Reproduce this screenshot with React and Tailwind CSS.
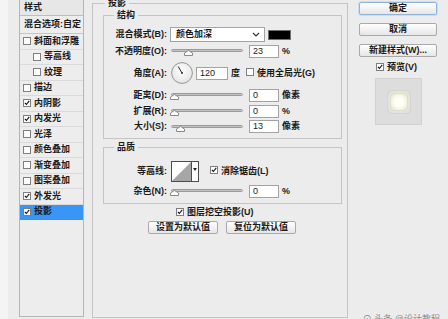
import React from "react";

// Photoshop "图层样式" dialog, drop shadow page
const STYLES = [
  { name: "斜面和浮雕", on: false },
  { name: "等高线", on: false, sub: true },
  { name: "纹理", on: false, sub: true },
  { name: "描边", on: false },
  { name: "内阴影", on: true },
  { name: "内发光", on: true },
  { name: "光泽", on: false },
  { name: "颜色叠加", on: false },
  { name: "渐变叠加", on: false },
  { name: "图案叠加", on: false },
  { name: "外发光", on: true },
  { name: "投影", on: true, active: true },
];

function Check({ on }) {
  return (
    <span className="inline-flex h-[8px] w-[8px] shrink-0 items-center justify-center border border-[#7f7f7f] bg-white">
      {on && (
        <svg viewBox="0 0 8 8" className="h-[8px] w-[8px]">
          <path d="M1.2 3.8 L3.2 6 L7 1.2" fill="none" stroke="#111" strokeWidth="1.5" />
        </svg>
      )}
    </span>
  );
}

function Slider({ thumb }) {
  return (
    <div className="relative ml-[4px] h-[10px] w-[72px] shrink-0">
      <div className="absolute left-0 right-0 top-[3px] h-[3px] rounded-full border border-[#9a9a9a] bg-gradient-to-b from-[#a9a9a9] to-[#dedede]" />
      <svg viewBox="0 0 9 6" className="absolute top-[4px] h-[6px] w-[9px]" style={{ left: thumb - 4 }}>
        <path d="M0.5 5.5 L0.5 3 L4.5 0.5 L8.5 3 L8.5 5.5 Z" fill="#fff" stroke="#888" strokeWidth="1" />
      </svg>
    </div>
  );
}

function Field({ value, className = "ml-[6px] w-[30px]" }) {
  return (
    <div className={`${className} flex h-[13px] shrink-0 items-center border border-[#a3a3a3] bg-white pl-[3px] text-[9px] font-normal leading-[11px]`}>
      {value}
    </div>
  );
}

function Label({ children }) {
  return <div className="w-[63px] shrink-0 text-right">{children}</div>;
}

function Button({ children, primary, className = "" }) {
  return (
    <div
      className={`flex h-[13px] items-center justify-center rounded-[2px] border bg-gradient-to-b from-white to-[#e6e6e6] text-[9px] font-semibold leading-[11px] ${
        primary ? "border-[#8fb4de] shadow-[0_0_0_1px_#c9def4]" : "border-[#a9a9a9]"
      } ${className}`}
    >
      {children}
    </div>
  );
}

function SliderRow({ label, value, unit, thumb, h = "h-[16px]" }) {
  return (
    <div className={`flex ${h} items-center`}>
      <Label>{label}</Label>
      <Slider thumb={thumb} />
      <Field value={value} />
      <span className="ml-[3px]">{unit}</span>
    </div>
  );
}

export default function App() {
  return (
    <div className="relative flex h-[319px] w-[448px] overflow-hidden bg-[#ececec] font-['Liberation_Sans','Noto_Sans_CJK_SC',sans-serif] text-[9px] font-semibold leading-[11px] text-[#1a1a1a]">
      <div className="w-[8px] shrink-0 bg-[#f4f4f4]" />
      <div className="w-[11px] shrink-0" />

      {/* style list */}
      <div className="flex h-[317px] w-[65px] shrink-0 flex-col border-x border-b border-[#b5b5b5] bg-[#ededed]">
        <div className="flex h-[16px] shrink-0 items-center border-b border-[#bdbdbd] bg-[#e7e7e7] pl-[4px]">样式</div>
        <div className="flex h-[18px] shrink-0 items-center border-b border-[#c6c6c6] pl-[4px]">混合选项:自定</div>
        {STYLES.map((s) => (
          <div
            key={s.name}
            className={`flex h-[15.5px] shrink-0 items-center gap-[3px] border-b ${
              s.active ? "border-[#3592f0] bg-[#3a96f6]" : "border-[#dadada]"
            } ${s.sub ? "pl-[13px]" : "pl-[3px]"}`}
          >
            <Check on={s.on} />
            <span>{s.name}</span>
          </div>
        ))}
      </div>

      {/* main drop shadow panel */}
      <fieldset className="ml-[8px] mt-[-2px] h-[320px] w-[256px] shrink-0 border border-[#c4c4c4] pl-[10px] pr-[5px]">
        <legend className="ml-[2px] px-[3px] leading-[10px]">投影</legend>

        <fieldset className="mt-[2px] h-[129px] border border-[#c4c4c4] pt-[6px]">
          <legend className="ml-[10px] px-[3px] leading-[10px]">结构</legend>

          <div className="flex h-[17px] items-center">
            <Label>混合模式(B):</Label>
            <div className="ml-[3px] flex h-[15px] w-[95px] items-center justify-between border border-[#a3a3a3] bg-white pl-[5px] pr-[4px]">
              <span>颜色加深</span>
              <svg viewBox="0 0 8 5" className="h-[5px] w-[8px]">
                <path d="M1 1 L4 4 L7 1" fill="none" stroke="#333" strokeWidth="1.1" />
              </svg>
            </div>
            <div className="ml-[3px] h-[10px] w-[23px] border border-[#6f6f6f] bg-black" />
          </div>

          <SliderRow label="不透明度(O):" value="23" unit="%" thumb={17} />

          <div className="flex h-[28px] items-center">
            <Label>角度(A):</Label>
            <svg viewBox="0 0 22 22" className="ml-[4px] h-[22px] w-[22px] shrink-0">
              <defs>
                <radialGradient id="dial" cx="50%" cy="40%" r="60%">
                  <stop offset="0%" stopColor="#ffffff" />
                  <stop offset="100%" stopColor="#e4e4e4" />
                </radialGradient>
              </defs>
              <circle cx="11" cy="11" r="10.4" fill="url(#dial)" stroke="#8c8c8c" strokeWidth="0.9" />
              <path d="M11 11 L7.2 4.5" stroke="#222" strokeWidth="1" />
              <circle cx="11" cy="11" r="0.9" fill="#222" />
            </svg>
            <Field value="120" className="ml-[3px] w-[32px]" />
            <span className="ml-[3px]">度</span>
            <span className="ml-[6px]"><Check on={false} /></span>
            <span className="ml-[3px]">使用全局光(G)</span>
          </div>

          <SliderRow label="距离(D):" value="0" unit="像素" thumb={3} />
          <SliderRow label="扩展(R):" value="0" unit="%" thumb={3} />
          <SliderRow label="大小(S):" value="13" unit="像素" thumb={9} h="h-[15px]" />
        </fieldset>

        <fieldset className="mt-[3px] h-[62px] border border-[#c4c4c4] pt-[8px]">
          <legend className="ml-[10px] px-[3px] leading-[10px]">品质</legend>

          <div className="flex h-[23px] items-center">
            <Label>等高线:</Label>
            <div className="ml-[4px] flex h-[21px] w-[28px] shrink-0 border border-[#4d4d4d] bg-white">
              <svg viewBox="0 0 19 19" className="h-[19px] w-[19px]">
                <path d="M0 19 L19 0 L19 19 Z" fill="#a6a6a6" />
              </svg>
              <div className="flex flex-1 justify-center border-l border-[#4d4d4d] pt-[6px]">
                <svg viewBox="0 0 4 3" className="h-[3px] w-[4px]">
                  <path d="M0 0 L4 0 L2 3 Z" fill="#222" />
                </svg>
              </div>
            </div>
            <span className="ml-[11px]"><Check on /></span>
            <span className="ml-[3px]">消除锯齿(L)</span>
          </div>

          <SliderRow label="杂色(N):" value="0" unit="%" thumb={3} />
        </fieldset>

        <div className="mt-[1px] flex h-[14px] items-center pl-[73px]">
          <Check on />
          <span className="ml-[3px]">图层挖空投影(U)</span>
        </div>

        <div className="mt-[2px] flex gap-[8px] pl-[45px]">
          <Button className="w-[70px]">设置为默认值</Button>
          <Button className="w-[70px]">复位为默认值</Button>
        </div>
      </fieldset>

      {/* right column */}
      <div className="ml-[11px] flex w-[78px] shrink-0 flex-col pt-[2px]">
        <Button primary className="h-[12px]">确定</Button>
        <Button className="mt-[8px] h-[12px]">取消</Button>
        <Button className="mt-[8px] h-[12px]">新建样式(W)...</Button>
        <div className="mt-[3px] flex h-[14px] items-center pl-[17px]">
          <Check on />
          <span className="ml-[3px]">预览(V)</span>
        </div>
        <div className="ml-[16px] mt-[4px] flex h-[47px] w-[47px] items-center justify-center border border-[#d2d2d2] bg-[#dddddd]">
          <div className="flex h-[24px] w-[24px] items-center justify-center rounded-[4px] border border-[#d3d3cb]">
            <div className="h-[18px] w-[18px] rounded-[5px] border border-[#deded0] bg-[radial-gradient(circle,#fefef4_40%,#f0f0d8_75%,#e0e0cc)] shadow-[0_0_3px_1px_#ebebe0]" />
          </div>
        </div>
      </div>

      <div className="absolute bottom-[-6px] right-[8px] text-[9px] font-normal text-[#8a8a8a]">⊙ 头条 @设计教程</div>
    </div>
  );
}
